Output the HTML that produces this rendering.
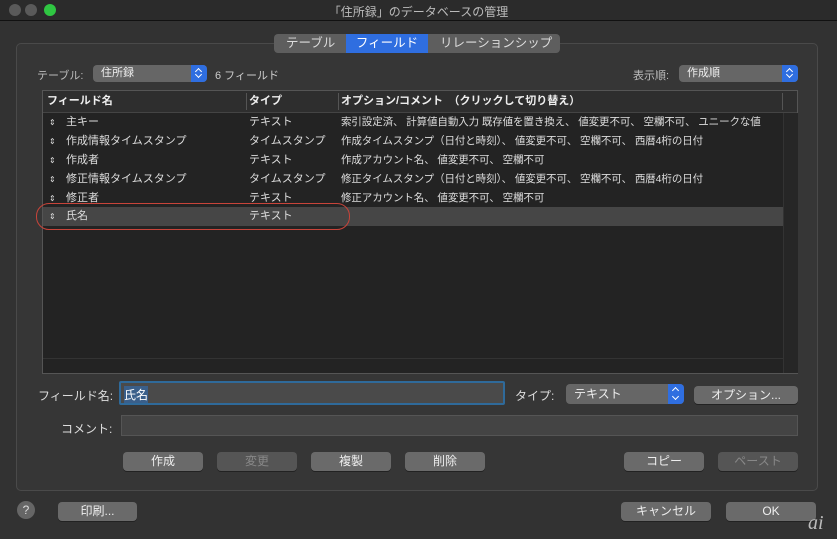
<html><head><style>
body{margin:0;width:837px;height:539px;background:#323232;font-family:"Liberation Sans","Noto Sans CJK JP",sans-serif;color:#ddd;font-size:11px;position:relative;overflow:hidden}
.a{position:absolute}
.btn{position:absolute;background:#6a6a6a;border-radius:4px;color:#eee;text-align:center;font-size:12px;box-shadow:0 1px 0 #222}
.row{position:absolute;left:43px;width:740px;height:19px;line-height:19px;font-size:11px;color:#ddd}
.row span{position:absolute;white-space:nowrap}
.row .c{font-size:10.5px;letter-spacing:-0.1px}
.pop{position:absolute;background:#666;border-radius:4px;color:#eee;font-size:11px}
.pop i{position:absolute;right:0;top:0;bottom:0;width:16px;background:#2f6ee0;border-radius:0 4px 4px 0}
.pop i:before,.pop i:after{content:"";position:absolute;left:5px;width:4px;height:4px;border-left:1.2px solid #fff;border-top:1.2px solid #fff}
.pop i:before{top:4px;transform:rotate(45deg)}
.pop i:after{bottom:5px;transform:rotate(225deg)}
</style></head><body>
<div class="a" style="left:0;top:0;width:837px;height:20px;background:#2b2b2b;border-bottom:1px solid #111"></div>
<div class="a" style="left:9px;top:4px;width:12px;height:12px;border-radius:6px;background:#5a5a5a"></div>
<div class="a" style="left:25px;top:4px;width:12px;height:12px;border-radius:6px;background:#5a5a5a"></div>
<div class="a" style="left:44px;top:4px;width:12px;height:12px;border-radius:6px;background:#2fc642"></div>
<div class="a" style="left:0;width:837px;top:3px;text-align:center;font-size:12px;color:#bbb">「住所録」のデータベースの管理</div>
<div class="a" style="left:16px;top:43px;width:800px;height:446px;border:1px solid #4a4a4a;border-radius:5px;background:#363636"></div>
<div class="a" style="left:274px;top:34px;width:286px;height:19px;border-radius:4px;background:#5e5e5e;font-size:12.5px;line-height:19px;color:#ddd">
<span class="a" style="left:12px">テーブル</span>
<span class="a" style="left:72px;width:82px;height:19px;background:#2f6ee0;color:#fff;text-align:center">フィールド</span>
<span class="a" style="left:166px">リレーションシップ</span></div>
<div class="a" style="left:37px;top:67px;color:#bbb">テーブル:</div>
<div class="pop" style="left:93px;top:65px;width:114px;height:17px;line-height:17px"><span style="margin-left:8px">住所録</span><i></i></div>
<div class="a" style="left:215px;top:67px;color:#ccc">6 フィールド</div>
<div class="a" style="left:633px;top:67px;color:#bbb">表示順:</div>
<div class="pop" style="left:679px;top:65px;width:119px;height:17px;line-height:17px"><span style="margin-left:8px">作成順</span><i></i></div>
<div class="a" style="left:42px;top:90px;width:754px;height:282px;background:#232323;border:1px solid #555"></div>
<div class="a" style="left:43px;top:91px;width:754px;height:21px;background:#2e2e2e;border-bottom:1px solid #444;font-weight:bold;font-size:11px;line-height:21px;color:#eee">
<span class="a" style="left:4px">フィールド名</span><span class="a" style="left:203px;top:2px;height:17px;border-left:1px solid #555"></span>
<span class="a" style="left:206px">タイプ</span><span class="a" style="left:295px;top:2px;height:17px;border-left:1px solid #555"></span>
<span class="a" style="left:298px">オプション/コメント　（クリックして切り替え）</span><span class="a" style="left:739px;top:2px;height:17px;border-left:1px solid #555"></span></div>
<div class="a" style="left:783px;top:113px;width:14px;height:260px;background:#262626;border-left:1px solid #333"></div>
<div class="a" style="left:43px;top:358px;width:740px;height:1px;background:#333"></div>
<div class="row" style="top:113px"><span style="left:6px;font-size:8px">⇕</span><span style="left:23px">主キー</span><span style="left:206px">テキスト</span><span class="c" style="left:298px">索引設定済、 計算値自動入力 既存値を置き換え、 値変更不可、 空欄不可、 ユニークな値</span></div>
<div class="row" style="top:132px"><span style="left:6px;font-size:8px">⇕</span><span style="left:23px">作成情報タイムスタンプ</span><span style="left:206px">タイムスタンプ</span><span class="c" style="left:298px">作成タイムスタンプ（日付と時刻）、 値変更不可、 空欄不可、 西暦4桁の日付</span></div>
<div class="row" style="top:151px"><span style="left:6px;font-size:8px">⇕</span><span style="left:23px">作成者</span><span style="left:206px">テキスト</span><span class="c" style="left:298px">作成アカウント名、 値変更不可、 空欄不可</span></div>
<div class="row" style="top:170px"><span style="left:6px;font-size:8px">⇕</span><span style="left:23px">修正情報タイムスタンプ</span><span style="left:206px">タイムスタンプ</span><span class="c" style="left:298px">修正タイムスタンプ（日付と時刻）、 値変更不可、 空欄不可、 西暦4桁の日付</span></div>
<div class="row" style="top:189px"><span style="left:6px;font-size:8px">⇕</span><span style="left:23px">修正者</span><span style="left:206px">テキスト</span><span class="c" style="left:298px">修正アカウント名、 値変更不可、 空欄不可</span></div>
<div class="row" style="top:207px;background:#464646"><span style="left:6px;font-size:8px">⇕</span><span style="left:23px">氏名</span><span style="left:206px">テキスト</span></div>
<div class="a" style="left:36px;top:203px;width:312px;height:25px;border:1.5px solid #c8443a;border-radius:13px"></div>
<div class="a" style="left:38px;top:387px;font-size:12px;color:#ddd">フィールド名:</div>
<div class="a" style="left:119px;top:381px;width:386px;height:24px;background:#4a4a4a;border:2px solid #2f6a9a;border-radius:2px;box-sizing:border-box"><span class="a" style="left:3px;top:3px;background:#3a5f8a;color:#fff;font-size:12px">氏名</span></div>
<div class="a" style="left:515px;top:387px;font-size:12px">タイプ:</div>
<div class="pop" style="left:566px;top:384px;width:118px;height:20px;line-height:20px;font-size:12px"><span style="margin-left:8px">テキスト</span><i></i></div>
<div class="btn" style="left:694px;top:386px;width:104px;height:18px;line-height:18px">オプション...</div>
<div class="a" style="left:61px;top:420px;font-size:12px">コメント:</div>
<div class="a" style="left:121px;top:415px;width:677px;height:21px;background:#444;border:1px solid #555;box-sizing:border-box"></div>
<div class="btn" style="left:123px;top:452px;width:80px;height:19px;line-height:19px">作成</div>
<div class="btn" style="left:217px;top:452px;width:80px;height:19px;line-height:19px;background:#555;color:#888">変更</div>
<div class="btn" style="left:311px;top:452px;width:80px;height:19px;line-height:19px">複製</div>
<div class="btn" style="left:405px;top:452px;width:80px;height:19px;line-height:19px">削除</div>
<div class="btn" style="left:624px;top:452px;width:80px;height:19px;line-height:19px">コピー</div>
<div class="btn" style="left:718px;top:452px;width:80px;height:19px;line-height:19px;background:#555;color:#888">ペースト</div>
<div class="a" style="left:17px;top:501px;width:18px;height:18px;border-radius:9px;background:#666;text-align:center;line-height:18px;font-size:12px">?</div>
<div class="btn" style="left:58px;top:502px;width:79px;height:19px;line-height:19px">印刷...</div>
<div class="btn" style="left:621px;top:502px;width:90px;height:19px;line-height:19px">キャンセル</div>
<div class="btn" style="left:726px;top:502px;width:90px;height:19px;line-height:19px">OK</div>
<div class="a" style="left:808px;top:512px;font-size:20px;font-style:italic;color:#bbb;font-family:'Liberation Serif',serif">ai</div>
</body></html>
